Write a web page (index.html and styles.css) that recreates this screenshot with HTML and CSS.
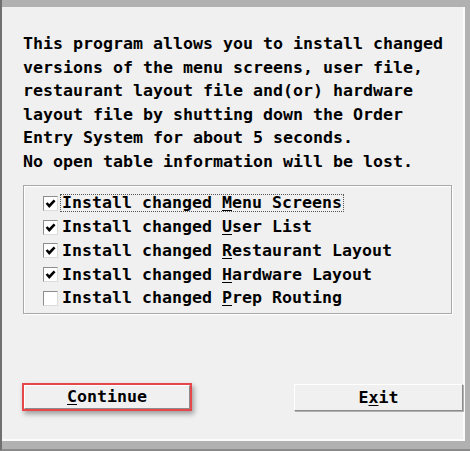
FILE: index.html
```html
<!DOCTYPE html>
<html lang="en">
<head>
  <meta charset="UTF-8" />
  <title>Install Changed Files</title>
  <link rel="stylesheet" href="styles.css">
</head>
<body>
  <div class="window">
    <div class="panel">
      <p class="intro">
        This program allows you to install changed versions of the menu screens, user file, restaurant layout file and(or) hardware layout file by shutting down the Order Entry System for about 5 seconds.<br>
        No open table information will be lost.
      </p>

      <div class="group">
        <label class="option">
          <span class="box checked"><svg viewBox="0 0 13 13"><path d="M2.6 6 L5.3 9 L10.6 3.4" /></svg></span>
          <span class="caption focused">Install changed <u>M</u>enu Screens</span>
        </label>
        <label class="option">
          <span class="box checked"><svg viewBox="0 0 13 13"><path d="M2.6 6 L5.3 9 L10.6 3.4" /></svg></span>
          <span class="caption">Install changed <u>U</u>ser List</span>
        </label>
        <label class="option">
          <span class="box checked"><svg viewBox="0 0 13 13"><path d="M2.6 6 L5.3 9 L10.6 3.4" /></svg></span>
          <span class="caption">Install changed <u>R</u>estaurant Layout</span>
        </label>
        <label class="option">
          <span class="box checked"><svg viewBox="0 0 13 13"><path d="M2.6 6 L5.3 9 L10.6 3.4" /></svg></span>
          <span class="caption">Install changed <u>H</u>ardware Layout</span>
        </label>
        <label class="option">
          <span class="box"></span>
          <span class="caption">Install changed <u>P</u>rep Routing</span>
        </label>
      </div>

      <div class="actions">
        <div class="highlight">
          <button class="btn"><u>C</u>ontinue</button>
        </div>
        <button class="btn exit">E<u>x</u>it</button>
      </div>
    </div>
  </div>
</body>
</html>
```

FILE: styles.css
```css
* { box-sizing: border-box; }
body {
  margin: 0;
  background: #b3b3b3;
  font-family: 'DejaVu Sans Mono', 'Liberation Mono', monospace;
  font-weight: bold;
  font-size: 16.61px;
  color: #000;
}
.window {
  width: 470px;
  height: 451px;
  background: #b1b1b1;
  border-left: 2px solid #707070;
  border-bottom: 2px solid #8a8a8a;
  padding: 7px 5px 0 0;
}
.panel {
  height: 434px;
  background: #f0f0f0;
  border-right: 2px solid #fbfbfb;
  border-bottom: 2px solid #fbfbfb;
  padding: 25px 0 0 21px;
}
.intro {
  margin: 0;
  width: 430px;
  line-height: 23.6px;
}
.group {
  margin-top: 11px;
  width: 429px;
  height: 129px;
  border: 1px solid #a8a8a8;
  box-shadow: inset 1px 1px 0 #fff, 1px 1px 0 #fff;
  padding: 6px 0 0 19px;
}
.option {
  display: flex;
  align-items: center;
  height: 23.75px;
}
.box {
  width: 15px;
  height: 15px;
  background: #fff;
  border: 1px solid #8d8d8d;
  border-right-color: #dcdcdc;
  border-bottom-color: #dcdcdc;
  display: flex;
}
.box svg {
  width: 13px;
  height: 13px;
}
.box svg path {
  fill: none;
  stroke: #000;
  stroke-width: 2.6;
}
.caption {
  margin-left: 2px;
  padding: 0 1px;
  border: 1px dotted transparent;
  line-height: 16px;
}
.caption.focused {
  border-color: #555;
}
u {
  text-decoration-thickness: 1px;
  text-underline-offset: 2px;
}
.actions {
  display: flex;
  align-items: flex-start;
  margin-top: 69px;
  margin-left: -1px;
}
.highlight {
  width: 170px;
  height: 28px;
  border: 2px solid #e5474b;
  box-shadow: 2px 3px 5px rgba(0, 0, 0, 0.35);
}
.btn {
  font: inherit;
  color: #000;
  background: #f0f0f0;
  border: 1px solid #fff;
  border-right-color: #8c8c8c;
  border-bottom-color: #8c8c8c;
  padding: 0;
  width: 100%;
  height: 100%;
  cursor: pointer;
}
.exit {
  width: 169px;
  height: 27px;
  margin-left: auto;
  margin-top: 1px;
  box-shadow: 1px 1px 0 #b0b0b0;
}
```
